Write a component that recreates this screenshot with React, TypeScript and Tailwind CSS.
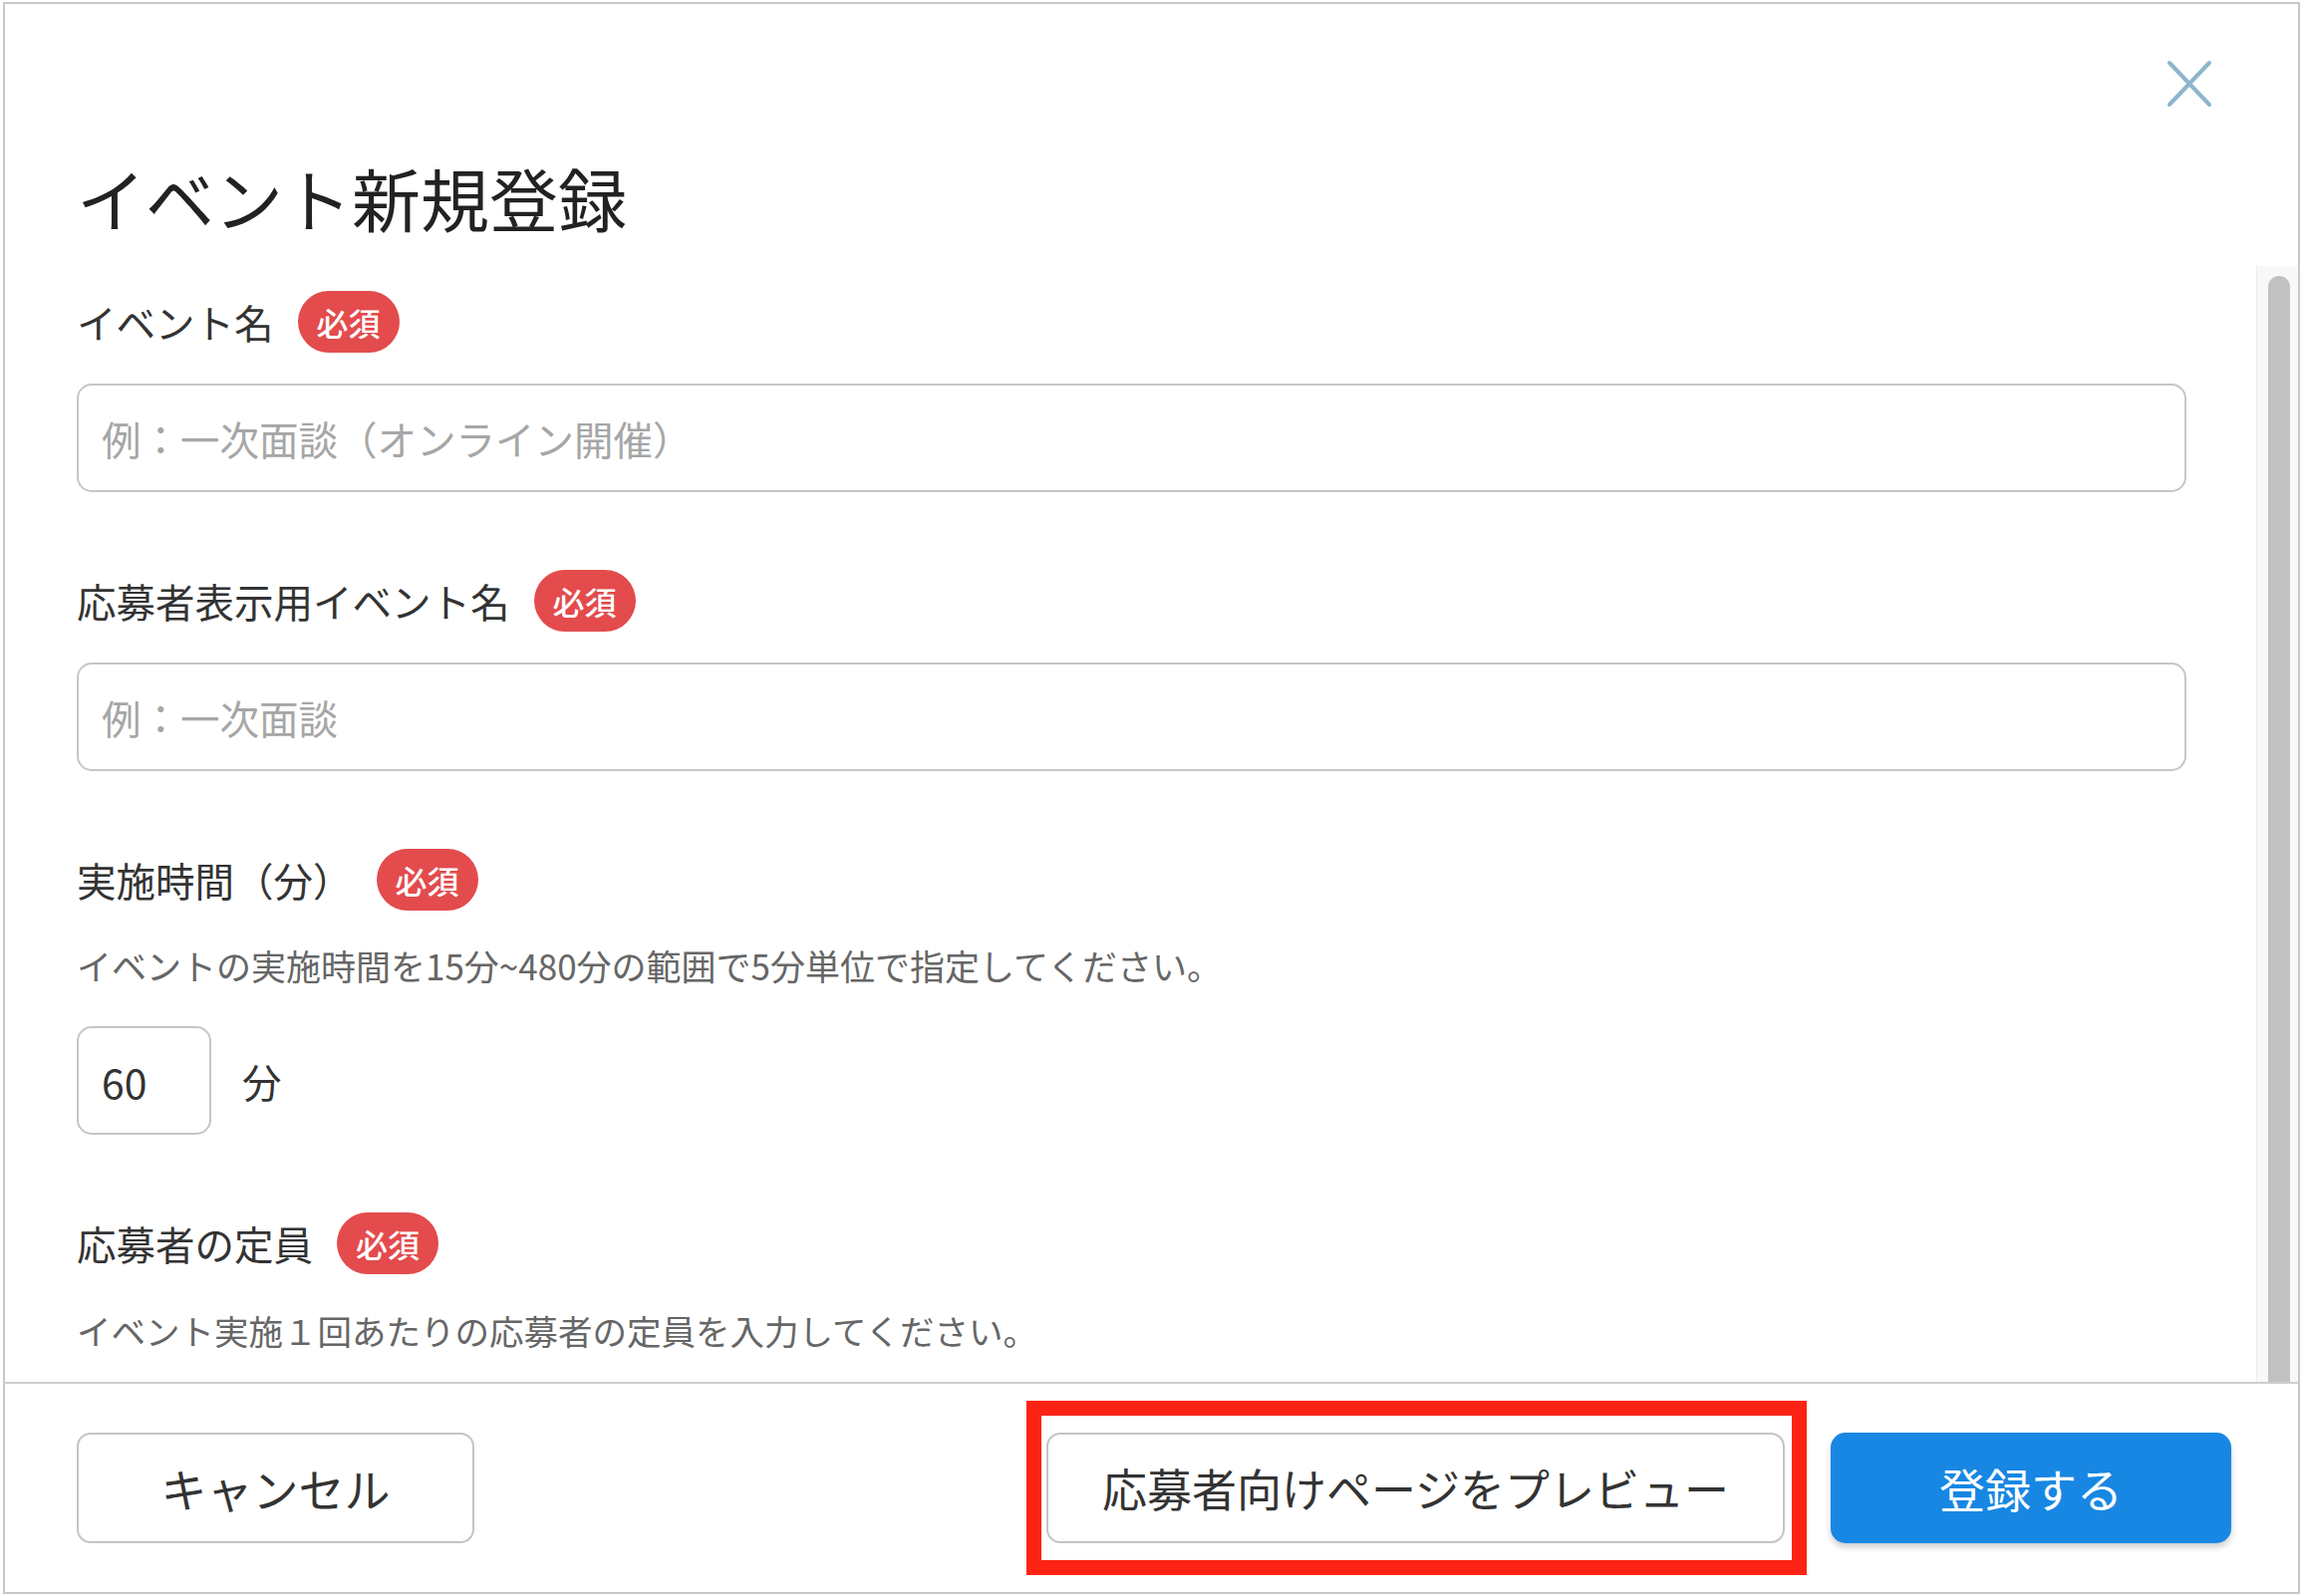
import React from "react";

const font = "font-['Noto_Sans_CJK_JP','Noto_Sans',sans-serif]";

function Required() {
    return (
        <span className="inline-flex items-center justify-center h-[62px] w-[102px] rounded-full bg-[#e34b4d] text-white text-[32px] font-medium leading-none">
            必須
        </span>
    );
}

function FieldLabel({ children }: { children: React.ReactNode }) {
    return (
        <div className="flex items-center gap-[24px]">
            <span className="text-[39.5px] leading-none text-[#333]">{children}</span>
            <Required />
        </div>
    );
}

function TextInput({ placeholder }: { placeholder: string }) {
    return (
        <input
            type="text"
            placeholder={placeholder}
            className={`${font} mt-[31px] block w-full h-[109px] rounded-[15px] border-2 border-[#c6c6c6] bg-white px-[23px] text-[39.5px] text-[#333] placeholder:text-[#a6a6a6] outline-none`}
        />
    );
}

export default function App() {
    return (
        <div className={`${font} w-[2313px] h-[1602px] bg-white pt-[2px] pl-[3px]`}>
            <div className="w-[2305px] h-[1598px] border-2 border-[#c8c8c8] flex flex-col bg-white">
                {/* header */}
                <div className="relative h-[263px] shrink-0 pl-[72px] pt-[160px]">
                    <h1 className="text-[69px] leading-none text-[#222] font-normal">イベント新規登録</h1>
                    <button className="absolute top-[56px] right-[86px] w-[46px] h-[48px] flex items-center justify-center">
                        <svg width="46" height="48" viewBox="0 0 46 48" fill="none">
                            <path d="M3 3 L43 45 M43 3 L3 45" stroke="#8db5cd" strokeWidth="4" strokeLinecap="round" />
                        </svg>
                    </button>
                </div>

                {/* body */}
                <div className="flex-1 flex min-h-0">
                    <div className="flex-1 overflow-hidden pl-[72px] pr-[70px] pt-[25px]">
                        <FieldLabel>イベント名</FieldLabel>
                        <TextInput placeholder="例：一次面談（オンライン開催）" />

                        <div className="mt-[78px]">
                            <FieldLabel>応募者表示用イベント名</FieldLabel>
                        </div>
                        <TextInput placeholder="例：一次面談" />

                        <div className="mt-[78px]">
                            <FieldLabel>実施時間（分）</FieldLabel>
                        </div>
                        <p className="mt-[30px] text-[35px] leading-[50px] text-[#666]">
                            イベントの実施時間を15分~480分の範囲で5分単位で指定してください。
                        </p>
                        <div className="mt-[36px] flex items-center gap-[31px]">
                            <input
                                type="text"
                                defaultValue="60"
                                className={`${font} block w-[135px] h-[109px] rounded-[15px] border-2 border-[#c6c6c6] bg-white px-[23px] text-[41px] text-[#333] outline-none`}
                            />
                            <span className="text-[39.5px] leading-none text-[#333]">分</span>
                        </div>

                        <div className="mt-[78px]">
                            <FieldLabel>応募者の定員</FieldLabel>
                        </div>
                        <p className="mt-[31px] text-[34.5px] leading-[50px] text-[#666]">
                            イベント実施１回あたりの応募者の定員を入力してください。
                        </p>
                    </div>

                    {/* scrollbar */}
                    <div className="w-[42px] shrink-0 bg-[#f8f8f8] border-l border-[#ebebeb] pl-[11px] pt-[10px]">
                        <div className="w-[22px] h-full rounded-t-full bg-[#c1c1c1]" />
                    </div>
                </div>

                {/* footer */}
                <div className="h-[211px] shrink-0 border-t-2 border-[#cdcdcd] flex items-center pl-[72px] pr-[67px]">
                    <button className="w-[399px] h-[111px] rounded-[14px] border-2 border-[#c4c4c4] bg-white text-[46px] text-[#333]">
                        キャンセル
                    </button>
                    <div className="ml-auto border-[15px] border-[#fc2314] py-[17px] pl-[5px] pr-[7px] bg-white">
                        <button className="w-[741px] h-[111px] rounded-[14px] border-2 border-[#c4c4c4] bg-white text-[45px] text-[#333]">
                            応募者向けページをプレビュー
                        </button>
                    </div>
                    <button className="ml-[24px] w-[402px] h-[111px] rounded-[15px] bg-[#1787e3] text-[46px] text-white shadow-[0_4px_6px_rgba(0,0,0,0.2)]">
                        登録する
                    </button>
                </div>
            </div>
        </div>
    );
}
